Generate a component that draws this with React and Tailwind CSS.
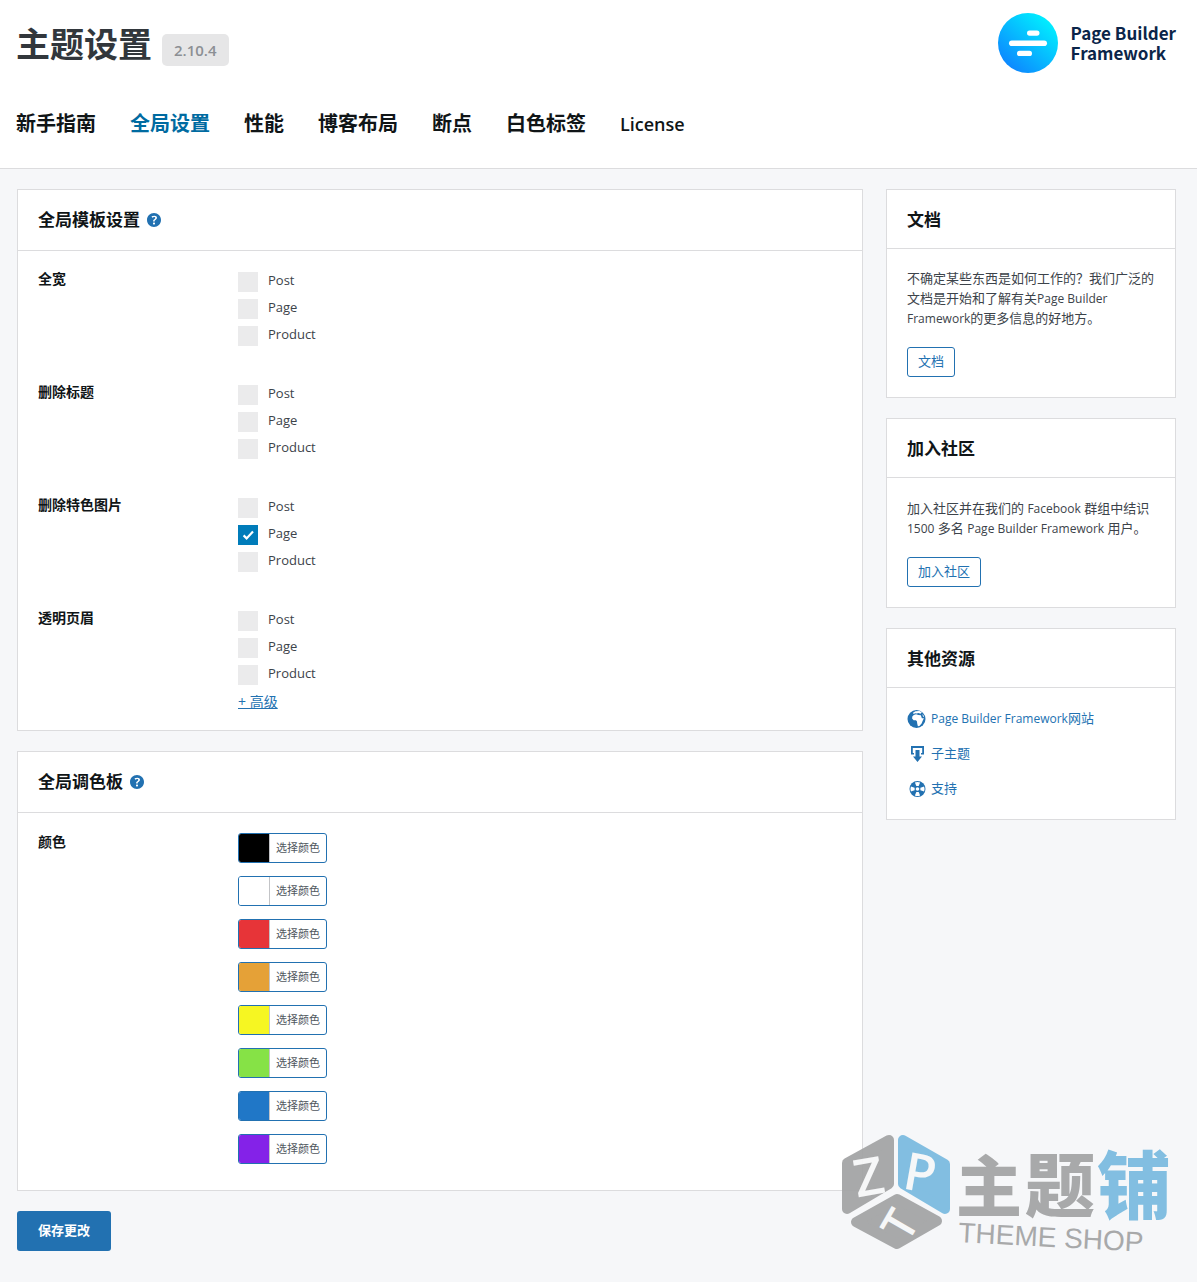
import React from "react";

const HELP_PATH =
  "M17 10c0-3.87-3.14-7-7-7-3.87 0-7 3.13-7 7s3.13 7 7 7c3.86 0 7-3.13 7-7zm-6.3 1.48H9.14v-.43c0-.38.08-.7.24-.98s.46-.57.88-.89c.41-.29.68-.53.81-.71.14-.18.2-.39.2-.62 0-.25-.09-.44-.28-.58-.19-.13-.45-.19-.79-.19-.58 0-1.25.19-2 .57l-.64-1.28c.87-.49 1.8-.74 2.77-.74.81 0 1.45.2 1.92.58.48.39.71.91.71 1.55 0 .43-.09.8-.29 1.11-.19.32-.57.67-1.11 1.06-.38.28-.61.49-.71.63-.1.15-.15.34-.15.57v.35zm-1.47 2.74c-.18-.17-.27-.42-.27-.73 0-.33.08-.58.26-.75s.43-.25.77-.25c.32 0 .57.09.75.26s.27.42.27.74c0 .3-.09.55-.27.72-.18.18-.43.27-.75.27-.33 0-.58-.09-.76-.26z";

const tabs = ["新手指南", "全局设置", "性能", "博客布局", "断点", "白色标签", "License"];
const groups = [
  { id: "full", label: "全宽", checked: [] },
  { id: "title", label: "删除标题", checked: [] },
  { id: "thumb", label: "删除特色图片", checked: ["Page"] },
  { id: "header", label: "透明页眉", checked: [], advanced: true },
];
const postTypes = ["Post", "Page", "Product"];
const palette = ["#000000", "#ffffff", "#e73438", "#e5a137", "#f6f622", "#86e246", "#2077c7", "#8422e8"];

function HelpIcon() {
  return (
    <svg viewBox="0 0 20 20" className="size-5 fill-[#2271b1]" aria-hidden="true">
      <path d={HELP_PATH} />
    </svg>
  );
}

function GlobeIcon() {
  return (
    <svg viewBox="0 0 20 20" className="size-5 shrink-0" aria-hidden="true">
      <circle cx="9.500" cy="10" r="9" fill="#2271b1" />
      <g fill="#ffffff">
        <path d="M6 3.800L8.500 2.200L12.500 1.900L14.800 3.300L13.500 4.800L11.500 3.900L9.600 4.600L8.200 4.300L6.600 5z" />
        <path d="M6.800 6L9 5.300L11.300 5.900L13.800 6.300L14.900 9.300L16.900 9.200L15.600 12L14.600 14.400L12.400 17L10.900 17.300L10.300 15L9.900 12.200L8.900 11.300L6.600 11.300L5.100 9.600L5.300 7.600z" />
        <path d="M15.300 5l1.300 1.500.6 1.700-1.200-.7z" />
      </g>
    </svg>
  );
}

function DownloadIcon() {
  return (
    <svg viewBox="0 0 20 20" className="size-5 shrink-0 fill-[#2271b1]" aria-hidden="true">
      <path d="M4 2h13v8.500h-3V9h1.200V4H5.800v5H7v1.500H4z" />
      <path d="M8.500 6h4v6.500H15L10.500 18 6 12.500h2.500z" />
    </svg>
  );
}

function SupportIcon() {
  return (
    <svg viewBox="0 0 20 20" className="size-5 shrink-0" aria-hidden="true">
      <circle cx="10.500" cy="10" r="8" fill="#2271b1" />
      <g fill="#ffffff" transform="translate(-0.5 0)">
        <path d="M8.400 3.400Q11 2.400 13.600 3.400L12.200 7.100H9.800z" />
        <path d="M8.400 16.600Q11 17.600 13.600 16.600L12.200 12.900H9.800z" />
        <path d="M4.400 7.400Q3.400 10 4.400 12.600L8.100 11.200V8.800z" />
        <path d="M17.600 7.400Q18.600 10 17.600 12.600L13.900 11.200V8.800z" />
        <circle cx="11" cy="10" r="1.800" />
      </g>
    </svg>
  );
}

function BrandLogo() {
  return (
    <div className="flex items-center gap-[13px]">
      <svg viewBox="0 0 60 60" className="size-[60px]" aria-hidden="true">
        <defs>
          <linearGradient id="brand" x1="0.15" y1="0.9" x2="0.85" y2="0.1">
            <stop offset="0" stopColor="#0d86ff" />
            <stop offset="1" stopColor="#00f0ff" />
          </linearGradient>
        </defs>
        <circle cx="30" cy="30" r="30" fill="url(#brand)" />
        <g fill="#ffffff">
          <rect x="29" y="17.500" width="12.500" height="5.200" rx="2.600" />
          <rect x="11" y="27.400" width="38" height="5.600" rx="2.800" />
          <rect x="19" y="37.800" width="15" height="5.200" rx="2.600" />
        </g>
      </svg>
      <p className="font-['Noto_Sans_CJK_SC',sans-serif] text-[17px] leading-5 font-bold text-[#0b2549]">
        Page Builder
        <br />
        Framework
      </p>
    </div>
  );
}

function Panel({ title, help, children, narrow }) {
  return (
    <section className="border border-[#dcdcde] bg-white">
      <h2
        className={
          "flex items-center gap-1 border-b border-[#dcdcde] px-5 text-[17px] font-bold text-[#101517] " +
          (narrow ? "h-[59px] pt-[2px]" : "h-[61px]")
        }
      >
        {title}
        {help && <HelpIcon />}
      </h2>
      {children}
    </section>
  );
}

function Latin({ children }) {
  return <span className="text-xs">{children}</span>;
}

function CheckRow({ name, id, checked }) {
  return (
    <label htmlFor={id} className="flex h-[27px] items-center gap-[10px] text-[13px] text-[#3c434a]">
      <span className="relative flex size-5">
        <input
          id={id}
          type="checkbox"
          defaultChecked={checked}
          className="peer size-5 appearance-none bg-[#ebebec] checked:bg-[#007cba]"
        />
        <svg
          viewBox="0 0 20 20"
          className="pointer-events-none absolute inset-0 hidden size-5 fill-none stroke-white peer-checked:block"
          aria-hidden="true"
        >
          <path d="M5.600 10.400l3 3 6.400-6.800" strokeWidth="2.200" />
        </svg>
      </span>
      <span className="pb-[2px]">{name}</span>
    </label>
  );
}

function OutlineButton({ children }) {
  return (
    <a
      href="#"
      className="inline-flex h-[30px] items-center rounded-[3px] border border-[#2271b1] px-[10px] text-[13px] text-[#2271b1]"
    >
      {children}
    </a>
  );
}

function Watermark() {
  return (
    <svg
      viewBox="0 -20 330 150"
      className="pointer-events-none absolute right-[26px] bottom-5 h-[150px] w-[330px] opacity-95"
      role="img"
      aria-label="主题铺 THEME SHOP"
    >
      <g strokeLinejoin="round" strokeWidth="10">
        <path d="M48 8L6 31V77L48 52Z" fill="#a4a5a6" stroke="#a4a5a6" />
        <path d="M62 8L104 32V77L62 52Z" fill="#7cbce0" stroke="#7cbce0" />
        <path d="M56 67L96 89L56 112L15 90Z" fill="#a4a5a6" stroke="#a4a5a6" />
      </g>
      <g className="font-['Open_Sans',sans-serif] font-semibold" fill="#f6f7f8" textAnchor="middle">
        <text fontSize="52" transform="translate(31 63) rotate(-10)">Z</text>
        <text fontSize="52" transform="translate(76 59) rotate(10)">P</text>
        <text fontSize="46" transform="translate(73 101) rotate(-60)">T</text>
      </g>
      <g className="font-['Noto_Sans_CJK_SC',sans-serif] font-black" textAnchor="middle">
        <text x="148" y="79" fontSize="66" fill="#a4a5a6">主</text>
        <text x="219" y="80" fontSize="70" fill="#a4a5a6">题</text>
        <text x="293" y="81" fontSize="74" fill="#7cbce0">铺</text>
      </g>
      <text
        x="117"
        y="110"
        fontSize="28"
        fill="#a4a5a6"
        transform="rotate(3 117 110)"
        className="font-['Liberation_Sans',sans-serif]"
      >
        THEME SHOP
      </text>
    </svg>
  );
}

export default function App() {
  return (
    <div className="relative min-h-screen bg-[#f6f7f9] pb-[31px] font-['Open_Sans','Noto_Sans_CJK_SC',sans-serif] text-[13px] text-[#3c434a]">
      <header className="border-b border-[#dcdcde] bg-white pt-[13px] pr-[21px] pl-4">
        <div className="flex h-[60px] items-start justify-between">
          <div className="flex items-end gap-[10px] pt-[6px]">
            <h1 className="text-[34px] leading-[50px] font-bold text-[#32373c]">主题设置</h1>
            <span className="mb-[3px] flex h-8 items-center rounded-[5px] bg-[#e6e6e7] px-3 text-[15px] font-semibold text-[#8c8f94]">
              2.10.4
            </span>
          </div>
          <BrandLogo />
        </div>
        <nav className="flex h-[95px] items-center gap-[34px] pt-[6px] text-[20px] text-[#101517]">
          {tabs.map((tab) => (
            <a
              key={tab}
              href="#"
              className={
                tab === "全局设置"
                  ? "font-bold text-[#006ba1]"
                  : tab === "License"
                    ? "text-lg font-semibold"
                    : "font-bold"
              }
            >
              {tab}
            </a>
          ))}
        </nav>
      </header>

      <div className="flex items-start gap-[23px] pt-5 pr-[21px] pl-[17px]">
        <main className="flex min-w-0 flex-1 flex-col gap-5">
          <Panel title="全局模板设置" help>
            <div className="flex flex-col gap-8 px-5 pt-[17px] pb-[18px]">
              {groups.map((g) => (
                <fieldset key={g.id} className="flex">
                  <legend className="float-left w-[200px] pt-px text-sm font-bold text-[#101517]">{g.label}</legend>
                  <div>
                    {postTypes.map((t) => (
                      <CheckRow key={t} name={t} id={g.id + "-" + t} checked={g.checked.includes(t)} />
                    ))}
                    {g.advanced && (
                      <a href="#" className="block pt-1 text-sm text-[#2271b1] underline">
                        + 高级
                      </a>
                    )}
                  </div>
                </fieldset>
              ))}
            </div>
          </Panel>

          <Panel title="全局调色板" help>
            <div className="flex px-5 pt-5 pb-[26px]">
              <h3 className="w-[200px] text-sm leading-[18px] font-bold text-[#101517]">颜色</h3>
              <div className="flex flex-col gap-[13px]">
                {palette.map((c) => (
                  <button
                    key={c}
                    type="button"
                    className="flex h-[30px] overflow-hidden rounded-[3px] border border-[#2271b1] bg-white text-[11px] text-[#50575e]"
                  >
                    <span className="h-full w-[30px]" style={{ backgroundColor: c }} />
                    <span className="flex h-full items-center border-l border-[#c3c4c7] px-[6px]">选择颜色</span>
                  </button>
                ))}
              </div>
            </div>
          </Panel>

          <div>
            <button
              type="button"
              className="h-10 rounded-[3px] bg-[#2271b1] px-[21px] text-[13px] font-bold text-white"
            >
              保存更改
            </button>
          </div>
        </main>

        <aside className="flex w-[290px] shrink-0 flex-col gap-5">
          <Panel title="文档" narrow>
            <div className="px-5 pt-[19px] pb-5">
              <p className="mb-[19px] leading-5">
                不确定某些东西是如何工作的？我们广泛的文档是开始和了解有关<Latin>Page Builder Framework</Latin>
                的更多信息的好地方。
              </p>
              <OutlineButton>文档</OutlineButton>
            </div>
          </Panel>
          <Panel title="加入社区" narrow>
            <div className="p-5">
              <p className="mb-[19px] leading-5">
                加入社区并在我们的 <Latin>Facebook</Latin> 群组中结识 <Latin>1500</Latin> 多名{" "}
                <Latin>Page Builder Framework</Latin> 用户。
              </p>
              <OutlineButton>加入社区</OutlineButton>
            </div>
          </Panel>
          <Panel title="其他资源" narrow>
            <ul className="flex flex-col gap-[15px] px-5 pt-[21px] pb-5 text-[#2271b1]">
              <li>
                <a href="#" className="flex h-5 items-center gap-1">
                  <GlobeIcon />
                  <span>
                    <Latin>Page Builder Framework</Latin>网站
                  </span>
                </a>
              </li>
              <li>
                <a href="#" className="flex h-5 items-center gap-1">
                  <DownloadIcon />
                  子主题
                </a>
              </li>
              <li>
                <a href="#" className="flex h-5 items-center gap-1">
                  <SupportIcon />
                  支持
                </a>
              </li>
            </ul>
          </Panel>
        </aside>
      </div>
      <Watermark />
    </div>
  );
}
